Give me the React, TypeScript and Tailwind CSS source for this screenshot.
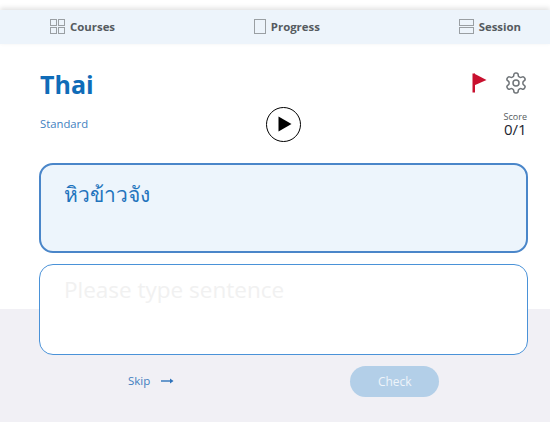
import React from "react";

const Nav = ({ icon, label }: { icon: React.ReactNode; label: string }) => (
  <div className="flex items-center gap-[5px]">
    {icon}
    <span className="text-[11.4px] font-bold text-[#555b60]">{label}</span>
  </div>
);

export default function App() {
  return (
    <div
      className="h-[422px] w-[550px] overflow-hidden bg-[linear-gradient(#ffffff_309px,#f1f0f5_309px)] pt-[10px] text-[#1f6fb8]"
      style={{ fontFamily: '"Open Sans", "Noto Sans", sans-serif' }}
    >
      <nav className="flex h-[34px] items-center justify-between bg-[#edf4fb] pl-[50px] pr-[29px] shadow-[0_-2px_5px_rgba(0,0,0,0.12)]">
        <Nav
          label="Courses"
          icon={
            <svg width="15" height="15" viewBox="0 0 15 15" fill="none" stroke="#9a9fa3" strokeWidth="1">
              <rect x="0.5" y="0.5" width="6" height="6" />
              <rect x="8.5" y="0.5" width="6" height="6" />
              <rect x="0.5" y="8.5" width="6" height="6" />
              <rect x="8.5" y="8.5" width="6" height="6" />
            </svg>
          }
        />
        <Nav
          label="Progress"
          icon={
            <svg width="12" height="15" viewBox="0 0 12 15" fill="none" stroke="#9a9fa3" strokeWidth="1">
              <rect x="0.5" y="0.5" width="11" height="14" />
            </svg>
          }
        />
        <Nav
          label="Session"
          icon={
            <svg width="15" height="15" viewBox="0 0 15 15" fill="none" stroke="#9a9fa3" strokeWidth="1">
              <rect x="0.5" y="0.5" width="14" height="6" />
              <rect x="0.5" y="8.5" width="14" height="6" />
            </svg>
          }
        />
      </nav>

      <main className="pl-[39px] pr-[22px]">
        <div className="flex items-start justify-between pl-px pt-[24px]">
          <h1 className="text-[25px] font-bold leading-[32px] text-[#0f6cb8]">Thai</h1>
          <div className="flex items-center gap-[17px] pt-[3px]">
            <svg width="15" height="20" viewBox="0 0 15 20">
              <rect x="0.5" y="0.5" width="2.5" height="19" fill="#c8102e" />
              <path d="M2 0.5 L14.5 7 L2 12.5 Z" fill="#c8102e" />
            </svg>
            <svg width="24" height="24" viewBox="0 0 24 24" fill="none" stroke="#6f7478" strokeWidth="1.5" strokeLinecap="round" strokeLinejoin="round">
              <path d="M12.22 2h-.44a2 2 0 0 0-2 2v.18a2 2 0 0 1-1 1.73l-.43.25a2 2 0 0 1-2 0l-.15-.08a2 2 0 0 0-2.73.73l-.22.38a2 2 0 0 0 .73 2.73l.15.1a2 2 0 0 1 1 1.72v.51a2 2 0 0 1-1 1.74l-.15.09a2 2 0 0 0-.73 2.73l.22.38a2 2 0 0 0 2.73.73l.15-.08a2 2 0 0 1 2 0l.43.25a2 2 0 0 1 1 1.73V20a2 2 0 0 0 2 2h.44a2 2 0 0 0 2-2v-.18a2 2 0 0 1 1-1.73l.43-.25a2 2 0 0 1 2 0l.15.08a2 2 0 0 0 2.73-.73l.22-.39a2 2 0 0 0-.73-2.73l-.15-.08a2 2 0 0 1-1-1.74v-.5a2 2 0 0 1 1-1.74l.15-.09a2 2 0 0 0 .73-2.73l-.22-.38a2 2 0 0 0-2.73-.73l-.15.08a2 2 0 0 1-2 0l-.43-.25a2 2 0 0 1-1-1.73V4a2 2 0 0 0-2-2z" />
              <circle cx="12" cy="12" r="3" />
            </svg>
          </div>
        </div>

        <div className="mt-[4px] grid h-[40px] grid-cols-[1fr_35px_1fr] items-center pl-px pr-px">
          <span className="text-[11.3px] text-[#3f7fc0]">Standard</span>
          <div className="flex h-[35px] w-[35px] items-center justify-center rounded-full border border-black bg-white">
            <svg width="14" height="16" viewBox="0 0 14 16" className="ml-[2px]">
              <path d="M0.5 0.5 L13.5 8 L0.5 15.5 Z" fill="#000" />
            </svg>
          </div>
          <div className="flex flex-col items-end">
            <div className="flex flex-col items-center">
              <span className="text-[9px] leading-[11px] text-[#555b60]">Score</span>
              <span className="text-[15px] leading-[15px] text-[#1c2430]">0/1</span>
            </div>
          </div>
        </div>

        <div
          className="mt-[19px] h-[90px] rounded-[14px] border-2 border-[#4a86c9] bg-[#edf5fc] pl-[23px] pt-[11px] text-[21px] leading-[36px] text-[#1f74bd]"
          style={{ fontFamily: '"Noto Sans", "Open Sans", sans-serif' }}
        >
          หิวข้าวจัง
        </div>

        <div className="mt-[11px] h-[91px] rounded-[14px] border border-[#4a92d8] bg-white pl-[24px] pt-[7px] text-[22.5px] leading-[36px] text-[#f1f1f1]">
          Please type sentence
        </div>

        <div className="mt-[11px] flex items-center">
          <div className="ml-[89px] flex items-center gap-[11px] pb-[2px] text-[11.5px] text-[#3f7fc0]">
            <span>Skip</span>
            <svg width="13" height="8" viewBox="0 0 13 8" fill="none" stroke="#2f73bb" strokeWidth="1.4">
              <path d="M0 4 H11" />
              <path d="M9 1.5 L12.5 4 L9 6.5 Z" fill="#2f73bb" stroke="none" />
            </svg>
          </div>
          <button className="ml-[176px] h-[31px] w-[89px] rounded-full bg-[#b3cfe8] text-[12px] text-[#eef4fa]">
            Check
          </button>
        </div>
      </main>
    </div>
  );
}
